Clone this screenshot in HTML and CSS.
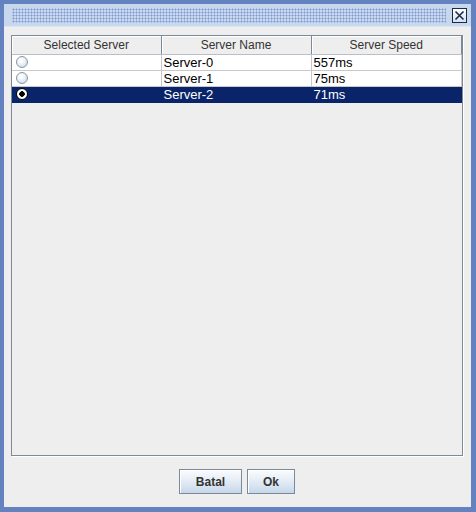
FILE: index.html
```html
<!DOCTYPE html>
<html>

<head>
  <meta charset="UTF-8">
  <title>Server</title>
  <link rel="stylesheet" href="styles.css">
</head>

<body>
  <div class="window">
    <div class="titlebar">
      <div class="bumps"></div>
      <div class="close">
        <svg width="13" height="13" viewBox="0 0 13 13">
          <path d="M2.5 2.5 L10.5 10.5 M10.5 2.5 L2.5 10.5" stroke="#1c2a48" stroke-width="1.6" fill="none" />
        </svg>
      </div>
    </div>
    <div class="content">
      <div class="scroll">
        <table class="servers">
          <thead>
            <tr>
              <th class="col-sel">Selected Server</th>
              <th class="col-name">Server Name</th>
              <th>Server Speed</th>
            </tr>
          </thead>
          <tbody>
            <tr>
              <td><span class="radio"></span></td>
              <td>Server-0</td>
              <td>557ms</td>
            </tr>
            <tr>
              <td><span class="radio"></span></td>
              <td>Server-1</td>
              <td>75ms</td>
            </tr>
            <tr class="selected">
              <td><span class="radio on"></span></td>
              <td>Server-2</td>
              <td>71ms</td>
            </tr>
          </tbody>
        </table>
      </div>
      <div class="buttons">
        <button class="batal">Batal</button>
        <button class="ok">Ok</button>
      </div>
    </div>
  </div>
</body>

</html>
```

FILE: styles.css
```css
* {
  padding: 0;
  margin: 0;
  box-sizing: border-box;
}

body {
  width: 476px;
  height: 512px;
  overflow: hidden;
  background: #eeeeee;
  font-family: "Liberation Sans", Arial, sans-serif;
  font-size: 12px;
}

.window {
  width: 476px;
  height: 512px;
  border: 4px solid #6382bf;
  border-right-width: 5px;
  border-bottom-width: 5px;
  display: flex;
  flex-direction: column;
  background: #eeeeee;
}

.titlebar {
  height: 23px;
  background: #c8d8ec;
  display: flex;
  flex-direction: row;
  align-items: center;
  padding: 0 4px 0 8px;
  border-bottom: 1px solid #dde6f2;
}

.bumps {
  flex: 1;
  height: 15px;
  margin-right: 6px;
  background-color: #c9d8ee;
  background-image: radial-gradient(circle, #7d99cf 0.9px, transparent 1.1px);
  background-size: 3px 3px;
}

.close {
  width: 15px;
  height: 15px;
  border: 1px solid #1c2a48;
  background: linear-gradient(#ffffff, #d4e0ee);
  display: flex;
  justify-content: center;
  align-items: center;
}

.content {
  flex: 1;
  display: flex;
  flex-direction: column;
  padding: 8px 8px 0 7px;
}

.scroll {
  flex: 1;
  border: 1px solid #7a8a99;
  box-shadow: 1px 1px 0 #ffffff;
  background: #eeeeee;
}

.servers {
  width: 450px;
  border-collapse: collapse;
  table-layout: fixed;
}

.servers th {
  height: 18px;
  font-weight: normal;
  color: #333333;
  background: #eeeeee;
  border-right: 1px solid #7a8a99;
  border-bottom: 1px solid #b8bfc8;
  box-shadow: inset 1px 1px 0 #ffffff;
  text-align: center;
  padding: 0;
}

.servers th.col-sel {
  width: 149px;
}

.servers th.col-name {
  width: 150px;
}

.servers td {
  height: 16px;
  background: #ffffff;
  color: #000000;
  border-right: 1px solid #c8c8c8;
  border-bottom: 1px solid #c8c8c8;
  padding: 0 0 0 2px;
  line-height: 15px;
  font-size: 13px;
}

.servers tr.selected td {
  background: #0a246a;
  color: #ffffff;
  border-color: #0a246a;
}

.radio {
  display: block;
  width: 12px;
  height: 12px;
  margin-left: 2px;
  border-radius: 50%;
  border: 1px solid #8a98aa;
  background: radial-gradient(circle at 40% 35%, #ffffff 15%, #c2d2e4 100%);
}

.radio.on {
  border-color: #000000;
  background: radial-gradient(circle, #000000 0 2.5px, #ffffff 3px);
}

.buttons {
  height: 51px;
  display: flex;
  flex-direction: row;
  justify-content: center;
  align-items: center;
  gap: 5px;
}

button {
  height: 25px;
  font-family: "Liberation Sans", Arial, sans-serif;
  font-size: 12px;
  font-weight: bold;
  color: #333333;
  border: 1px solid #7a8a99;
  box-shadow: inset 1px 1px 0 #ffffff;
  background: linear-gradient(#fbfcfe, #dde8f3 60%, #c6d6e8);
}

.batal {
  width: 63px;
}

.ok {
  width: 48px;
}
```
